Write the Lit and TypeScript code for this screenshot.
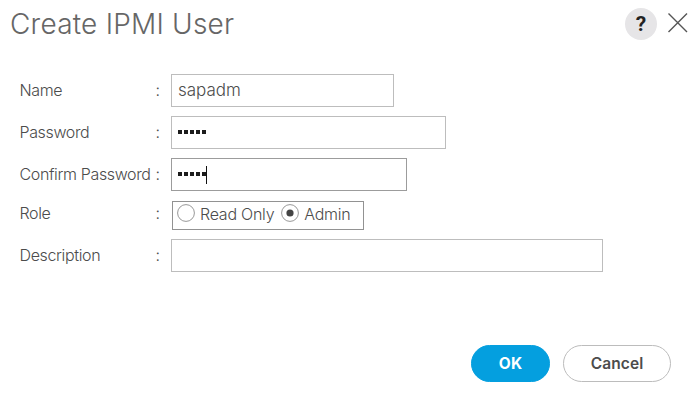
import { LitElement, html, css, svg, nothing } from "lit";
import { customElement, property } from "lit/decorators.js";
import { classMap } from "lit/directives/class-map.js";

@customElement("form-row")
class FormRow extends LitElement {
  @property() label = "";

  static styles = css`
    :host {
      display: grid;
      grid-template-columns: 136px 15.5px auto;
      justify-content: start;
      align-items: center;
    }
    .label,
    .colon {
      padding-bottom: 2px;
      font-size: 16px;
      line-height: 20px;
      letter-spacing: -0.36px;
      white-space: nowrap;
    }
    :host(.role) .label,
    :host(.role) .colon {
      padding-bottom: 4px;
    }
  `;

  render() {
    return html`
      <span class="label">${this.label}</span>
      <span class="colon">:</span>
      <slot></slot>
    `;
  }
}

@customElement("radio-option")
class RadioOption extends LitElement {
  @property() label = "";
  @property({ type: Boolean }) checked = false;

  static styles = css`
    :host {
      display: flex;
      align-items: center;
      gap: 5px;
      padding-bottom: 3px;
    }
    svg {
      display: block;
      margin-top: -2px;
    }
    .text {
      font-size: 16px;
      line-height: 20px;
      letter-spacing: -0.25px;
      white-space: nowrap;
    }
  `;

  render() {
    return html`
      <svg width="18" height="18" viewBox="0 0 18 18">
        <circle cx="9" cy="9" r="8.4" fill="#fff" stroke="#8c8c8c" stroke-width="0.9" />
        ${this.checked ? svg`<circle cx="9" cy="9" r="3.6" fill="#444" />` : nothing}
      </svg>
      <span class="text">${this.label}</span>
    `;
  }
}

@customElement("app-root")
class AppRoot extends LitElement {
  static styles = css`
    :host {
      display: flex;
      flex-direction: column;
      box-sizing: border-box;
      width: 700px;
      height: 405px;
      background: #fff;
      color: #4c4c4c;
      font-family: Inter, "Liberation Sans", sans-serif;
      font-weight: 300;
    }
    header {
      display: flex;
      align-items: center;
      height: 48px;
      padding: 0 11px 0 10px;
    }
    h1 {
      flex: 1;
      margin: 0;
      font-size: 28px;
      line-height: 34px;
      font-weight: 300;
      letter-spacing: 0.22px;
      color: #666;
    }
    .help {
      display: flex;
      align-items: center;
      justify-content: center;
      width: 32px;
      height: 32px;
      margin-right: 10px;
      border-radius: 50%;
      background: #e6e5e7;
      color: #222;
      font: 700 21px/32px Roboto, sans-serif;
    }
    .close {
      display: block;
      margin-top: -2px;
    }
    form {
      display: flex;
      flex-direction: column;
      gap: 9px;
      padding: 26px 0 0 19.5px;
    }
    .field {
      display: flex;
      align-items: center;
      box-sizing: border-box;
      height: 33px;
      padding-left: 6px;
      border: 1px solid #bdbdbd;
      font-size: 17px;
      line-height: 20px;
    }
    .value {
      padding-bottom: 2px;
    }
    .name { width: 223px; }
    .password { width: 275px; }
    .confirm { width: 236px; border-color: #9c9c9c; }
    .description { width: 432px; }
    .dots {
      display: flex;
      gap: 2px;
      padding-bottom: 1px;
    }
    .dot {
      width: 4px;
      height: 4px;
      background: #1c1c1c;
    }
    .caret {
      width: 1px;
      height: 18px;
      background: #111;
    }
    .roles {
      display: flex;
      align-items: center;
      gap: 7px;
      box-sizing: border-box;
      width: 192px;
      height: 29px;
      margin: 1px 0 0 1px;
      padding-left: 4px;
      border: 1px solid #929292;
    }
    footer {
      display: flex;
      justify-content: flex-end;
      gap: 13px;
      margin-top: auto;
      padding: 0 29px 23px 0;
    }
    .button {
      display: flex;
      align-items: center;
      justify-content: center;
      box-sizing: border-box;
      height: 37px;
      border: 1px solid #bcbcbc;
      border-radius: 19px;
      font-size: 15.5px;
      letter-spacing: 0.1px;
      font-weight: 600;
      background: #fff;
      color: #4c4c4c;
    }
    .ok {
      width: 79px;
      border-color: #049fdf;
      background: #049fdf;
      color: #fff;
      font-weight: 700;
    }
    .cancel { width: 108px; }
  `;

  private secret(name: string, focused: boolean) {
    return html`
      <div class=${classMap({ field: true, [name]: true })}>
        <div class="dots">${[1, 2, 3, 4, 5].map(() => html`<span class="dot"></span>`)}</div>
        ${focused ? html`<span class="caret"></span>` : nothing}
      </div>
    `;
  }

  render() {
    return html`
      <header>
        <h1>Create IPMI User</h1>
        <span class="help">?</span>
        <svg class="close" width="22" height="22" viewBox="0 0 22 22">
          <path d="M1.5 1.5 L20 20 M20 1.5 L1.5 20" fill="none" stroke="#555" stroke-width="1.4" />
        </svg>
      </header>
      <form>
        <form-row label="Name"><div class="field name"><span class="value">sapadm</span></div></form-row>
        <form-row label="Password">${this.secret("password", false)}</form-row>
        <form-row label="Confirm Password">${this.secret("confirm", true)}</form-row>
        <form-row class="role" label="Role">
          <div class="roles">
            <radio-option label="Read Only"></radio-option>
            <radio-option label="Admin" checked></radio-option>
          </div>
        </form-row>
        <form-row label="Description"><div class="field description"></div></form-row>
      </form>
      <footer>
        <div class="button ok">OK</div>
        <div class="button cancel">Cancel</div>
      </footer>
    `;
  }
}
